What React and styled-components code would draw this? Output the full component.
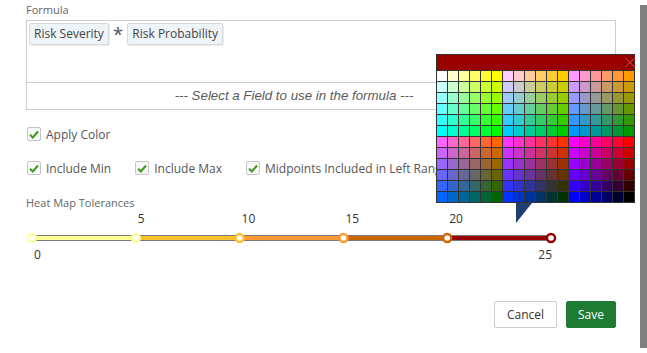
import React from 'react';
import styled, { createGlobalStyle } from 'styled-components';

const GlobalStyle = createGlobalStyle`
  body {
    margin: 0;
    background: #fff;
    font-family: "Open Sans", "Liberation Sans", sans-serif;
  }
`;

const Panel = styled.div`
  position: relative;
  width: 640px;
  height: 348px;
  box-sizing: border-box;
  padding: 2px 24px 0 26px;
  background: #fff;
  box-shadow: 7px 5px 0 #808080;
  display: flex;
  flex-direction: column;
`;

const SmallLabel = styled.div`
  font-size: 11px;
  line-height: 16px;
  color: #666;
  margin-top: ${(p) => p.top || 0}px;
`;

const FormulaBox = styled.div`
  margin-top: 2px;
  height: 62px;
  box-sizing: border-box;
  border: 1px solid #ccc;
  border-bottom: none;
  padding: 2px;
  display: flex;
  align-items: flex-start;
  gap: 3px;
`;

const Chip = styled.span`
  display: inline-block;
  height: 22px;
  box-sizing: border-box;
  padding: 0 4px;
  border: 1px solid #d4d9dd;
  border-radius: 2px;
  background: #eef4f8;
  box-shadow: 1px 1px 1px rgba(0, 0, 0, 0.08);
  font-size: 12px;
  line-height: 20px;
  color: #444;
`;

const Star = styled.span`
  font-size: 19px;
  line-height: 22px;
  color: #555;
  padding: 0 1px;
`;

const SelectRow = styled.div`
  height: 28px;
  box-sizing: border-box;
  border: 1px solid #ccc;
  padding-right: 54px;
  text-align: center;
  font-family: "Liberation Sans", Arial, sans-serif;
  font-style: italic;
  font-size: 13.3px;
  line-height: 26px;
  color: #5a5a5a;
`;

const CheckRow = styled.div`
  display: flex;
  align-items: center;
  height: 20px;
  margin-top: ${(p) => p.top}px;
  padding-left: 1px;
`;

const CheckItem = styled.label`
  display: flex;
  align-items: center;
  gap: 5px;
  margin-right: ${(p) => p.gap || 0}px;
  font-size: 12px;
  color: #555;
  white-space: nowrap;
`;

const Box = styled.span`
  width: 14px;
  height: 14px;
  box-sizing: border-box;
  border: 1px solid #c6c6c6;
  border-radius: 2px;
  background: #f8f8f8;
  display: flex;
  align-items: center;
  justify-content: center;
`;

const Track = styled.svg`
  display: block;
  overflow: visible;
`;

const Footer = styled.div`
  display: flex;
  justify-content: flex-end;
  gap: 9px;
  margin-top: 36px;
`;

const Button = styled.button`
  height: 27px;
  padding: 0 ${(p) => (p.primary ? 11 : 12)}px;
  border-radius: 2px;
  border: 1px solid ${(p) => (p.primary ? '#1e7b34' : '#ccc')};
  background: ${(p) => (p.primary ? '#1e7b34' : '#fff')};
  color: ${(p) => (p.primary ? '#fff' : '#333')};
  font-family: "Open Sans", "Liberation Sans", sans-serif;
  font-size: 12px;
`;

const Picker = styled.div`
  position: absolute;
  left: 436px;
  top: 54px;
  width: 199px;
  padding: 1px;
  box-sizing: border-box;
  background: #333;
  overflow: hidden;
`;

const PickerHead = styled.div`
  position: relative;
  height: 15px;
  background: #990000;
`;

const Close = styled.svg`
  position: absolute;
  right: -3px;
  top: 1px;
`;

const Swatches = styled.div`
  margin-top: 1px;
  display: grid;
  grid-template-columns: repeat(18, 10px);
  grid-auto-rows: 10px;
  gap: 1px;
`;

const Swatch = styled.span`
  background: ${(p) => p.color};
`;

const Pointer = styled.div`
  position: absolute;
  left: 516px;
  top: 203px;
  width: 0;
  height: 0;
  border-top: 20px solid #213f6e;
  border-right: 16px solid transparent;
`;

const hex = ['FF', 'CC', '99', '66', '33', '00'];
const palette = [];
for (let r = 0; r < 12; r++) {
  const half = r < 6 ? 0 : 3;
  for (let b = 0; b < 3; b++) {
    for (let c = 0; c < 6; c++) {
      palette.push('#' + hex[r % 6] + hex[half + b] + hex[c]);
    }
  }
}

const stops = [0, 5, 10, 15, 20, 25];
const colors = ['#ffff99', '#ffff99', '#fcc22e', '#ff9933', '#cc6600', '#990000'];
const px = (i) => 6 + i * 103.8;

const Check = () => (
  <svg width="10" height="9" viewBox="0 0 10 9">
    <path d="M1 4.8 L3.8 7.5 L9 1.5" fill="none" stroke="#3f9a1c" strokeWidth="2" />
  </svg>
);

const Checkbox = ({ label, gap }) => (
  <CheckItem gap={gap}>
    <Box>
      <Check />
    </Box>
    {label}
  </CheckItem>
);

export default function App() {
  return (
    <>
      <GlobalStyle />
      <Panel>
        <SmallLabel>Formula</SmallLabel>
        <FormulaBox>
          <Chip>Risk Severity</Chip>
          <Star>*</Star>
          <Chip>Risk Probability</Chip>
        </FormulaBox>
        <SelectRow>--- Select a Field to use in the formula ---</SelectRow>

        <CheckRow top={14}>
          <Checkbox label="Apply Color" />
        </CheckRow>
        <CheckRow top={14}>
          <Checkbox label="Include Min" gap={24} />
          <Checkbox label="Include Max" gap={24} />
          <Checkbox label="Midpoints Included in Left Range" />
        </CheckRow>

        <SmallLabel top={17}>Heat Map Tolerances</SmallLabel>
        <Track width="560" height="54">
          {stops.slice(1).map((s, i) => (
            <g key={s}>
              <rect x={px(i)} y="24" width={px(i + 1) - px(i)} height="6" fill="#7a7a7a" />
              <rect x={px(i)} y="25" width={px(i + 1) - px(i)} height="4" fill={colors[i + 1]} />
            </g>
          ))}
          {stops.map((s, i) => (
            <circle key={s} cx={px(i)} cy="27" r="4" fill="#fff" stroke={colors[i]} strokeWidth="2.4" />
          ))}
          {stops.map((s, i) => {
            const last = i === stops.length - 1;
            const below = i === 0 || last;
            return (
              <text
                key={s}
                x={last ? px(i) + 1 : px(i) + 2}
                y={below ? 48 : 12}
                textAnchor={last ? 'end' : 'start'}
                fontSize="12"
                fontFamily='"Open Sans", sans-serif'
                fill="#333"
              >
                {s}
              </text>
            );
          })}
        </Track>

        <Footer>
          <Button>Cancel</Button>
          <Button primary>Save</Button>
        </Footer>

        <Picker>
          <PickerHead>
            <Close width="14" height="13" viewBox="0 0 14 13">
              <path d="M2 1.5 L12 11.5 M12 1.5 L2 11.5" stroke="#5a0000" strokeWidth="3.4" />
              <path d="M2 1.5 L12 11.5 M12 1.5 L2 11.5" stroke="#e02020" strokeWidth="1.6" />
            </Close>
          </PickerHead>
          <Swatches>
            {palette.map((c, i) => (
              <Swatch key={i} color={c} />
            ))}
          </Swatches>
        </Picker>
        <Pointer />
      </Panel>
    </>
  );
}
